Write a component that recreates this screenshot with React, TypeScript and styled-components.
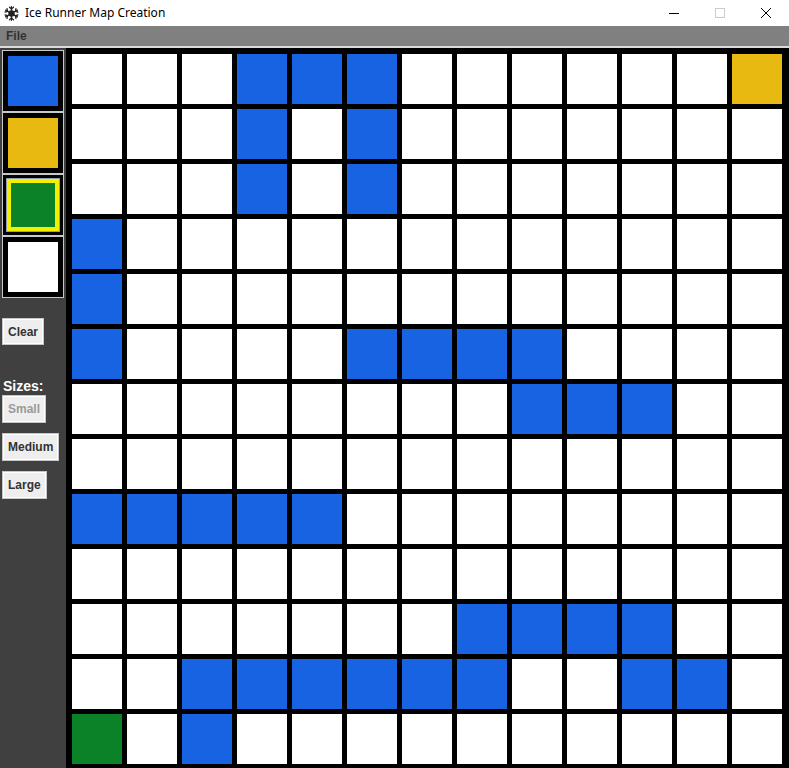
import React from "react";
import styled, { createGlobalStyle } from "styled-components";

const GlobalStyle = createGlobalStyle`
  html, body { margin: 0; padding: 0; overflow: hidden; background: #ffffff; }
  * { box-sizing: border-box; }
`;

type Tile = "W" | "B" | "Y" | "G";

const MAP: string[] = [
  "WWWBBBWWWWWWY",
  "WWWBWBWWWWWWW",
  "WWWBWBWWWWWWW",
  "BWWWWWWWWWWWW",
  "BWWWWWWWWWWWW",
  "BWWWWBBBBWWWW",
  "WWWWWWWWBBBWW",
  "WWWWWWWWWWWWW",
  "BBBBBWWWWWWWW",
  "WWWWWWWWWWWWW",
  "WWWWWWWBBBBWW",
  "WWBBBBBBWWBBW",
  "GWBWWWWWWWWWW",
];

const COLORS: Record<Tile, string> = {
  W: "#ffffff",
  B: "#1863e1",
  Y: "#e8b910",
  G: "#0b8228",
};

const Window = styled.div`
  width: 789px;
  height: 768px;
  display: flex;
  flex-direction: column;
  overflow: hidden;
  font-family: "Liberation Sans", Arial, sans-serif;
`;

const TitleBar = styled.div`
  height: 26px;
  flex: 0 0 26px;
  display: flex;
  align-items: center;
  background: #ffffff;
  padding-left: 4px;
`;

const TitleText = styled.span`
  font-family: "Noto Sans", "Open Sans", sans-serif;
  font-size: 12px;
  color: #000000;
  margin-left: 6px;
  flex: 1;
  margin-top: -1px;
`;

const Controls = styled.div`
  display: flex;
  align-items: center;
  height: 26px;
`;

const ControlBox = styled.div`
  width: 46px;
  height: 26px;
  display: flex;
  align-items: center;
  justify-content: center;
`;

const MenuBar = styled.div`
  height: 22px;
  flex: 0 0 22px;
  background: #808080;
  border-bottom: 2px solid #dcdcdc;
  display: flex;
  align-items: center;
  padding-left: 6px;
`;

const MenuItem = styled.span`
  font-size: 12px;
  font-weight: bold;
  color: #333333;
  margin-top: -1px;
`;

const Main = styled.div`
  flex: 1;
  display: flex;
  overflow: hidden;
`;

const Sidebar = styled.div`
  width: 66px;
  flex: 0 0 66px;
  background: #404040;
  display: flex;
  flex-direction: column;
  align-items: flex-start;
  padding: 2px 0 0 2px;
`;

const ColorButton = styled.div`
  width: 62px;
  height: 62px;
  border: 1px solid #c8c8c8;
  background: #000000;
  padding: 5px;
  display: flex;
  align-items: center;
  justify-content: center;
`;

const Swatch = styled.div<{ $color: string; $selected?: boolean }>`
  width: ${(p) => (p.$selected ? 52 : 50)}px;
  height: ${(p) => (p.$selected ? 52 : 50)}px;
  background: ${(p) => p.$color};
  border: ${(p) => (p.$selected ? "4px solid #f2f200" : "none")};
  box-shadow: ${(p) => (p.$selected ? "0 0 0 1px #8e9bb4" : "none")};
  flex: 0 0 auto;
`;

const PanelButton = styled.button<{ $top: number; $h: number }>`
  margin-top: ${(p) => p.$top}px;
  height: ${(p) => p.$h}px;
  padding: 0 5px;
  background: #eeeeee;
  border: 1px solid #c6c6c6;
  box-shadow: inset 0 0 0 1px #ffffff;
  font-family: "Liberation Sans", Arial, sans-serif;
  font-size: 12px;
  font-weight: bold;
  color: #333333;
  border-radius: 0;
  cursor: default;
  &:disabled {
    color: #9a9a9a;
  }
`;

const SizesLabel = styled.div`
  margin-top: 33px;
  margin-left: 1px;
  height: 16px;
  line-height: 16px;
  font-size: 14px;
  font-weight: bold;
  color: #ffffff;
`;

const Board = styled.div`
  flex: 1;
  background: #000000;
  padding: 6px 0 0 6px;
  display: grid;
  grid-template-columns: repeat(13, 50px);
  grid-auto-rows: 50px;
  gap: 5px;
  overflow: hidden;
  align-content: start;
`;

const Cell = styled.div<{ $color: string }>`
  width: 50px;
  height: 50px;
  background: ${(p) => p.$color};
`;

const Snowflake = () => (
  <svg width="15" height="15" viewBox="-7.5 -7.5 15 15">
    <g stroke="#222" strokeWidth="1.3" strokeLinecap="round" fill="none">
      {[0, 60, 120, 180, 240, 300].map((a) => (
        <g key={a} transform={`rotate(${a})`}>
          <line x1="0" y1="0" x2="0" y2="-6.8" />
          <polyline points="-2,-6.3 0,-4.6 2,-6.3" />
        </g>
      ))}
    </g>
    <circle cx="0" cy="0" r="3.2" fill="#222" />
  </svg>
);

export default function App() {
  const palette: Tile[] = ["B", "Y", "G", "W"];
  return (
    <>
      <GlobalStyle />
      <Window>
        <TitleBar>
          <Snowflake />
          <TitleText>Ice Runner Map Creation</TitleText>
          <Controls>
            <ControlBox>
              <svg width="10" height="10" viewBox="0 0 10 10">
                <line x1="0" y1="5.5" x2="10" y2="5.5" stroke="#000" strokeWidth="1" />
              </svg>
            </ControlBox>
            <ControlBox>
              <svg width="10" height="10" viewBox="0 0 10 10">
                <rect x="0.5" y="0.5" width="9" height="9" fill="none" stroke="#cccccc" strokeWidth="1" />
              </svg>
            </ControlBox>
            <ControlBox>
              <svg width="10" height="10" viewBox="0 0 10 10">
                <line x1="0" y1="0" x2="10" y2="10" stroke="#000" strokeWidth="1" />
                <line x1="10" y1="0" x2="0" y2="10" stroke="#000" strokeWidth="1" />
              </svg>
            </ControlBox>
          </Controls>
        </TitleBar>
        <MenuBar>
          <MenuItem>File</MenuItem>
        </MenuBar>
        <Main>
          <Sidebar>
            {palette.map((t) => (
              <ColorButton key={t}>
                <Swatch $color={COLORS[t]} $selected={t === "G"} />
              </ColorButton>
            ))}
            <PanelButton $top={20} $h={27}>Clear</PanelButton>
            <SizesLabel>Sizes:</SizesLabel>
            <PanelButton $top={1} $h={28} disabled>
              Small
            </PanelButton>
            <PanelButton $top={10} $h={28}>Medium</PanelButton>
            <PanelButton $top={10} $h={28}>Large</PanelButton>
          </Sidebar>
          <Board>
            {MAP.flatMap((row, r) =>
              row.split("").map((c, i) => (
                <Cell key={`${r}-${i}`} $color={COLORS[c as Tile]} />
              ))
            )}
          </Board>
        </Main>
      </Window>
    </>
  );
}
